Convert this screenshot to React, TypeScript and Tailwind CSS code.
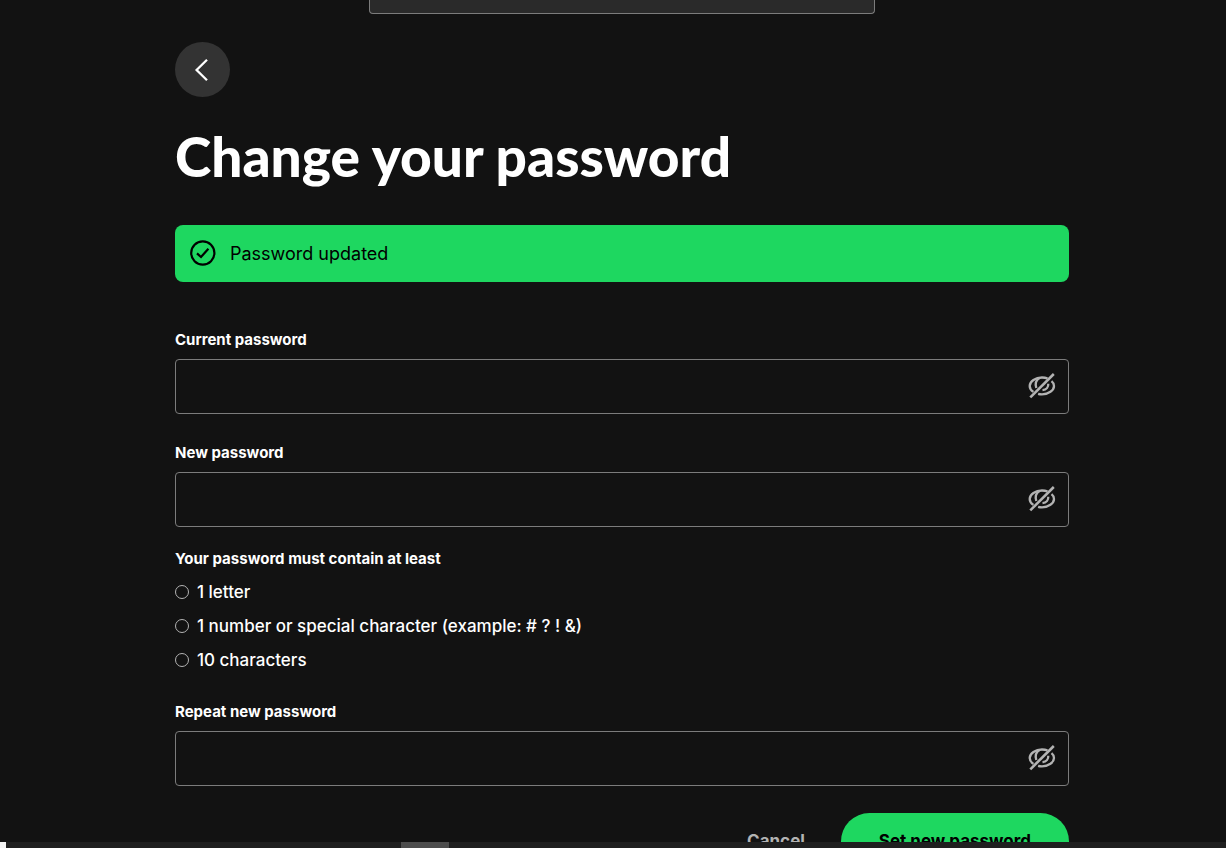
import { useState } from "react";

const REQUIREMENTS = [
  "1 letter",
  "1 number or special character (example: # ? ! &)",
  "10 characters",
];

interface FieldProps { id: string; label: string }

function HiddenIcon() {
  return (
    <svg width="28" height="28" viewBox="0 0 28 28" fill="none" stroke="currentColor" strokeWidth="2.3" aria-hidden="true">
      <path d="M19.5 5.4C17.8 4.800 16 4.500 14 4.500C7.500 4.500 1.700 8.500 1.700 12.900C1.700 15.300 3.200 17.400 5.400 18.900" />
      <path d="M23.500 8.200C25.200 9.600 26 11.200 26 12.900C26 17.300 20.500 21.300 14 21.300C12.600 21.300 11.300 21.200 10.100 20.800" />
      <path d="M11.500 5C8.200 7 7 10.800 8.300 15" />
      <path d="M20.300 10.800C20.500 14 18.500 16.800 14.500 17.200" />
      <path d="M2.300 24.300L25.800 1" strokeWidth="2.600" />
    </svg>
  );
}

function PasswordField({ id, label }: FieldProps) {
  const [shown, setShown] = useState(false);

  return (
    <div>
      <label htmlFor={id} className="block text-[15px] leading-5 font-bold">{label}</label>
      <div className="mt-[9px] flex h-[55px] items-center rounded-[4px] border border-[#7c7c7c] focus-within:border-white">
        <input
          id={id}
          type={shown ? "text" : "password"}
          className="h-full min-w-0 flex-1 bg-transparent px-4 text-lg outline-none"
        />
        <button
          type="button"
          aria-label={shown ? "Hide password" : "Show password"}
          onClick={() => setShown(!shown)}
          className="mr-3 text-[#b3b3b3] hover:text-white"
        >
          <HiddenIcon />
        </button>
      </div>
    </div>
  );
}

export default function App() {
  return (
    <div className="flex h-screen flex-col bg-[#121212] font-['Inter','Liberation_Sans',sans-serif] text-white">
      <main className="min-h-0 flex-1 overflow-hidden pl-[18px]">
        <div className="mx-auto h-[14px] w-full max-w-[506px] rounded-b-[4px] border border-t-0 border-[#7c7c7c] bg-[#2a2a2a]" />

        <div className="mx-auto mt-7 w-full max-w-[894px]">
          <button
            type="button"
            aria-label="Back"
            className="flex size-[55px] items-center justify-center rounded-full bg-[#333333]"
          >
            <svg width="28" height="28" viewBox="0 0 28 28" fill="none" stroke="currentColor" strokeWidth="2.300" aria-hidden="true">
              <path d="M18 3.800L7.600 14L18 24.200" />
            </svg>
          </button>

          <h1 className="mt-7 font-['Lato','Liberation_Sans',sans-serif] text-[55px] leading-[62px] font-black">
            Change your password
          </h1>

          <div role="status" className="mt-[38px] flex h-[57px] items-center gap-[14px] rounded-lg bg-[#1ed760] px-[14px] text-black">
            <svg width="27" height="27" viewBox="0 0 27 27" fill="none" stroke="currentColor" strokeWidth="2.200" aria-hidden="true">
              <circle cx="13.800" cy="13" r="11.600" />
              <path d="M8 13.400L12 17L19.400 8.800" />
            </svg>
            <span className="text-lg">Password updated</span>
          </div>

          <form className="mt-12" onSubmit={(e) => e.preventDefault()}>
            <PasswordField id="current-password" label="Current password" />
            <div className="mt-[29px]">
              <PasswordField id="new-password" label="New password" />
            </div>

            <h2 className="mt-[22px] text-[15px] leading-5 font-bold">Your password must contain at least</h2>
            <ul className="mt-[11px] space-y-[10px]">
              {REQUIREMENTS.map((item) => (
                <li key={item} className="flex items-center gap-2 text-[17px] leading-6 font-medium">
                  <span className="size-[14px] shrink-0 rounded-full border border-[#b3b3b3]" />
                  {item}
                </li>
              ))}
            </ul>

            <div className="mt-[30px]">
              <PasswordField id="repeat-password" label="Repeat new password" />
            </div>

            <div className="mt-[27px] flex items-center justify-end gap-9 text-[17px] font-bold">
              <a href="#" className="text-[#b3b3b3] hover:text-white">Cancel</a>
              <button type="submit" className="h-[57px] rounded-full bg-[#1ed760] px-[38px] text-black">
                Set new password
              </button>
            </div>
          </form>
        </div>
      </main>

      <footer className="flex h-[6px] shrink-0 bg-[#1f1f1f]">
        <div className="w-[6px] bg-[#f2f2f2]" />
        <div className="ml-[395px] w-12 bg-[#4d4d4d]" />
      </footer>
    </div>
  );
}
